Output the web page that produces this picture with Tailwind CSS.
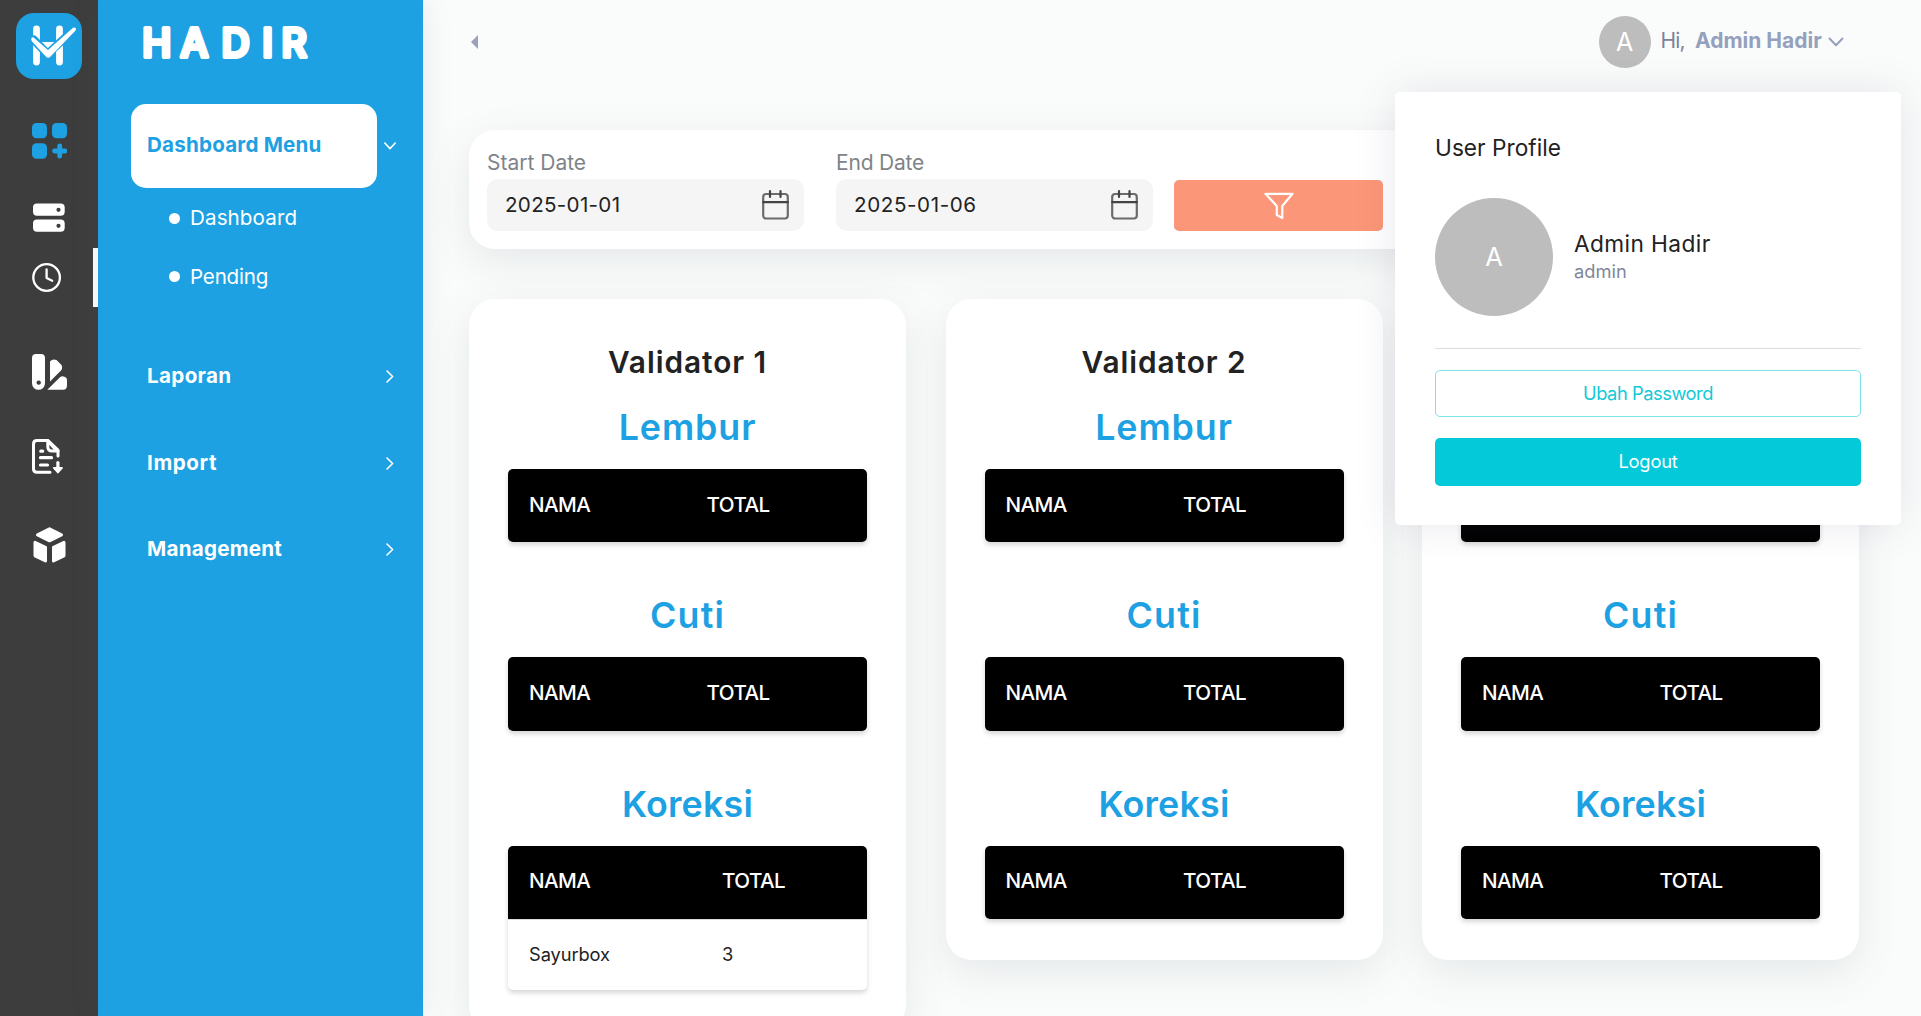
<!DOCTYPE html>
<html lang="id">
<head>
<meta charset="utf-8">
<title>Hadir</title>
<script src="https://cdn.jsdelivr.net/npm/@tailwindcss/browser@4"></script>
</head>
<body class="flex h-[1016px] w-[1921px] overflow-hidden bg-[#fafcfb] font-['Inter',sans-serif] text-[#222222]">

<!-- Icon rail -->
<aside class="z-10 flex h-full w-[98px] shrink-0 flex-col bg-[#3d3d3d] text-white">
  <svg class="mt-[13px] ml-4 size-[66px]" viewBox="16 13 66 66">
    <rect x="16" y="13" width="66" height="66" rx="18" fill="#1da1e2"/>
    <path d="M36.5 29V62M59.5 29V62M38 45.300H58" stroke="#fff" stroke-width="6.800" stroke-linecap="round" fill="none"/>
    <path d="M33.500 39.500 47.500 54 74 29.500" stroke="#1da1e2" stroke-width="8.500" stroke-linecap="round" stroke-linejoin="round" fill="none"/>
    <path d="M45 43.500H51L48 45.500Z" fill="#fff"/>
    <path d="M31.300 38.500Q32 36.600 33.600 37.400L48 50 73 27.800Q76.500 26.500 75.800 30.200L50.500 56.500Q48.200 59 45.800 56.500L32 41.500Q31 40.200 31.300 38.500Z" fill="#fff"/>
  </svg>
  <svg class="mt-11 ml-8 h-9 w-[35px] text-[#1da1e2]" viewBox="0 0 35 36" fill="currentColor">
    <rect width="15" height="15.300" rx="4.500"/><rect x="20" width="15" height="15.300" rx="4.500"/><rect y="20.300" width="15" height="15.500" rx="4.500"/>
    <path d="M27.700 22.800v10.400M22.500 28h10.400" stroke="currentColor" stroke-width="4.800" stroke-linecap="round"/>
  </svg>
  <svg class="mt-[44px] ml-[33px] h-[29px] w-8" viewBox="0 0 32 29">
    <rect y=".5" width="31.700" height="12.200" rx="4" fill="#fff"/><rect y="16.500" width="31.700" height="12.200" rx="4" fill="#fff"/>
    <circle cx="25.500" cy="6.800" r="2.100" fill="#3d3d3d"/><circle cx="25.500" cy="22.800" r="2.100" fill="#3d3d3d"/>
  </svg>
  <div class="mt-4 flex h-[59px] items-center border-r-[5px] border-white pb-px pl-8">
    <svg class="size-[29px]" viewBox="0 0 29 29" fill="none" stroke="currentColor" stroke-width="2.300" stroke-linecap="round" stroke-linejoin="round">
      <circle cx="14.600" cy="14.500" r="13.300"/><path d="M14.600 6.500V15l5.600 2.700"/>
    </svg>
  </div>
  <svg class="mt-[47px] ml-8 h-9 w-[35px]" viewBox="0 0 35 36" fill="currentColor">
    <path fill-rule="evenodd" d="M4 0H9Q13 0 13 4V29.300A6.500 6.500 0 0 1 0 29.300V4Q0 0 4 0ZM6.700 26.400a2.200 2.200 0 1 0 .01 0Z"/>
    <path d="M18 27.500V7.500Q20.500 4.500 24.500 6L29.500 11Q31 14 29 16.500Z"/>
    <path d="M15.300 35.700 28 23.300Q29.500 22 31.500 22.500 35 23 35 26V31.500Q35 35.700 31 35.700Z"/>
  </svg>
  <svg class="mt-[49px] ml-8 h-[35px] w-[31px]" viewBox="0 0 31 35" fill="none" stroke="currentColor" stroke-width="3" stroke-linecap="round" stroke-linejoin="round">
    <path d="M18 33.300H5Q1.500 33.300 1.500 30V5Q1.500 1.500 5 1.500H16L26 11.200V17"/>
    <path d="M15.800 1.600V7.500Q15.800 12 20 12H26M17.500 4 24 11"/>
    <path d="M8.800 12.200H10.700M8.500 18.700H19.500M8.500 26H15.500" stroke-width="3.200"/>
    <path d="M25.900 23.500V30" stroke-width="3.200"/><path d="M21.800 29H30L25.900 33.500Z" fill="currentColor" stroke-width="1.800"/>
  </svg>
  <svg class="mt-[53px] ml-[33px] h-9 w-[33px]" viewBox="0 0 33 36" fill="currentColor" stroke="currentColor" stroke-width="3" stroke-linejoin="round">
    <path d="M16.500 1.800 28.500 7.800 16.500 13.800 4.500 7.800Z"/>
    <path d="M2 15.300 12.500 20.300V34L2 28.800Z"/><path d="M31 15.300 20.500 20.300V34L31 28.800Z"/>
  </svg>
</aside>

<!-- Menu -->
<nav class="z-10 flex h-full w-[325px] shrink-0 flex-col bg-[#1da1e2] text-white shadow-[0_0_28px_rgba(82,100,105,0.12)]">
  <svg class="mt-2 ml-8 h-[70px] w-[200px] shrink-0" viewBox="130 8 200 70">
    <text x="142.300 180.500 221.500 262.200 281.500" y="57.400" fill="#fff" stroke="#fff" stroke-width="4.200" stroke-linejoin="round" font-family="Inter" font-weight="500" font-size="39">HADIR</text>
  </svg>
  <div class="mt-[26px] flex items-center pl-[33px]">
    <div class="flex h-[84px] w-[246px] items-center rounded-[15px] bg-white pb-px pl-4 text-[20.6px] font-bold tracking-[0.2px] text-[#1da1e2]">Dashboard Menu</div>
    <svg class="ml-[7px] h-2 w-3" viewBox="0 0 12 8" fill="none" stroke="currentColor" stroke-width="1.600" stroke-linecap="round" stroke-linejoin="round"><path d="M.8 1 6 6.600 11.200 1"/></svg>
  </div>
  <ul class="text-[20.6px]">
    <li class="flex h-[59px] items-center gap-2.5 pl-[71px]"><span class="mt-0.5 size-[11px] rounded-full bg-white"></span><span class="pt-0.5 tracking-[0.1px]">Dashboard</span></li>
    <li class="flex h-[59px] items-center gap-2.5 pl-[71px]"><span class="size-[11px] rounded-full bg-white"></span><span class="pt-0.5 tracking-[-0.2px]">Pending</span></li>
  </ul>
  <div class="mt-[27px] flex h-[87px] items-center justify-between pr-[29px] pl-[49px] text-[20.6px] font-bold"><span class="tracking-[0.35px]">Laporan</span>
    <svg class="h-[13px] w-2" viewBox="0 0 8 13" fill="none" stroke="currentColor" stroke-width="1.600" stroke-linecap="round" stroke-linejoin="round"><path d="M1 1 6.600 6.500 1 12"/></svg></div>
  <div class="flex h-[86px] items-center justify-between pr-[29px] pl-[49px] text-[20.6px] font-bold"><span class="tracking-[0.6px]">Import</span>
    <svg class="h-[13px] w-2" viewBox="0 0 8 13" fill="none" stroke="currentColor" stroke-width="1.600" stroke-linecap="round" stroke-linejoin="round"><path d="M1 1 6.600 6.500 1 12"/></svg></div>
  <div class="flex h-[86px] items-center justify-between pr-[29px] pl-[49px] text-[20.6px] font-bold"><span class="tracking-[0.25px]">Management</span>
    <svg class="h-[13px] w-2" viewBox="0 0 8 13" fill="none" stroke="currentColor" stroke-width="1.600" stroke-linecap="round" stroke-linejoin="round"><path d="M1 1 6.600 6.500 1 12"/></svg></div>
</nav>

<div class="relative flex min-w-0 flex-1 flex-col">
  <!-- Top bar -->
  <header class="flex h-[130px] shrink-0 items-start justify-between pt-4 pr-[77px] pl-[48px]">
    <svg class="mt-[19px] h-3.5 w-[7px]" viewBox="0 0 7 14"><path d="M7 0V14L0 7Z" fill="#9aa1bb"/></svg>
    <div class="flex items-center">
      <span class="flex size-[52px] items-center justify-center rounded-full bg-[#bdbdbd] pt-px text-[25px] text-white">A</span>
      <span class="mb-0.5 ml-2.5 w-[34.500px] text-[21px] tracking-[-0.8px] text-[#7e8299]">Hi,</span>
      <span class="mb-0.5 w-[133px] text-[21px] font-bold text-[#94a0bd]">Admin Hadir</span>
      <svg class="h-2.5 w-4" viewBox="0 0 16 10" fill="none" stroke="#94a0bd" stroke-width="2" stroke-linecap="round" stroke-linejoin="round"><path d="M1.500 1.500 8 8.200 14.500 1.500"/></svg>
    </div>
  </header>

  <main class="pl-[46px]">
    <!-- Date filter -->
    <section class="flex h-[119px] w-[1390px] items-start rounded-[26px] bg-white pt-[22px] pl-[18px] shadow-[0_12px_40px_rgba(82,92,105,0.12)]">
      <label class="w-[349px]">
        <span class="block text-[21px] leading-[22px] text-[#7e8488]">Start Date</span>
        <span class="mt-[5px] flex h-[52px] w-[317px] items-center justify-between rounded-[11px] bg-[#f5f5f5] pr-[15px] pl-[18px] text-[20.600px] tracking-[0.300px]"><span>2025-01-01</span>
          <svg class="h-[30px] w-[27px]" viewBox="0 0 27 30" fill="none" stroke="#6b6b6b" stroke-width="2.200" stroke-linecap="round"><rect x="1.200" y="4" width="24.600" height="24.500" rx="3"/><path d="M1.200 12.200H25.800M8 1.200V7M18.500 1.200V7" stroke="#444"/></svg>
        </span>
      </label>
      <label class="w-[338px]">
        <span class="block text-[21px] leading-[22px] tracking-[-0.200px] text-[#7e8488]">End Date</span>
        <span class="mt-[5px] flex h-[52px] w-[317px] items-center justify-between rounded-[11px] bg-[#f5f5f5] pr-[15px] pl-[18px] text-[20.600px] tracking-[0.600px]"><span>2025-01-06</span>
          <svg class="h-[30px] w-[27px]" viewBox="0 0 27 30" fill="none" stroke="#6b6b6b" stroke-width="2.200" stroke-linecap="round"><rect x="1.200" y="4" width="24.600" height="24.500" rx="3"/><path d="M1.200 12.200H25.800M8 1.200V7M18.500 1.200V7" stroke="#444"/></svg>
        </span>
      </label>
      <button class="mt-7 flex h-[51px] w-[209px] items-center justify-center rounded-[5px] bg-[#fb9678]">
        <svg class="h-7 w-[30px]" viewBox="0 0 30 28" fill="none" stroke="#fff" stroke-width="2.200" stroke-linejoin="round"><path d="M1.500 1.800H28.500L18.300 14V26L12.800 23V14Z"/></svg>
      </button>
    </section>

    <section id="cards" class="mt-[50px] flex items-start gap-[39.500px]"></section>
  </main>

  <!-- Profile menu -->
  <div class="absolute top-[92px] left-[972px] flex h-[433px] w-[506px] flex-col rounded-[5px] bg-white px-10 pt-[42px] shadow-[0_0_40px_rgba(82,63,105,0.13)]">
    <h3 class="text-[22.700px] leading-7">User Profile</h3>
    <div class="mt-9 flex items-center">
      <span class="flex size-[118px] items-center justify-center rounded-full bg-[#bdbdbd] text-[25.500px] text-white">A</span>
      <div class="ml-[21px] pb-0.5">
        <div class="pt-0.5 text-[22.700px] leading-7 tracking-[0.400px]">Admin Hadir</div>
        <div class="text-[18.300px] leading-[27px] text-[#80879b]">admin</div>
      </div>
    </div>
    <hr class="mt-8 border-[#dcdcdc]">
    <button class="mt-[21px] h-[47px] rounded-[5px] border border-[#7be3ea] text-[18.300px] tracking-[-0.450px] text-[#12c9d8]">Ubah Password</button>
    <button class="mt-[21px] h-12 rounded-[5px] bg-[#03c9d9] text-[18.300px] tracking-[-0.200px] text-white">Logout</button>
  </div>
</div>

<script>
const validators = [
  { name: "Validator 1", rows: { Koreksi: [["Sayurbox", 3]] } },
  { name: "Validator 2", rows: {} },
  { name: "Validator 3", rows: {} },
];
const headings = {
  Lembur: "tracking-[0.900px]",
  Cuti: "tracking-[1.200px]",
  Koreksi: "tracking-[0.200px]",
};
function table(title, rows) {
  const nameCol = rows.length ? "w-[193px]" : "w-[177.500px]";
  return `
  <h2 class="mb-5 text-center text-[35.800px] leading-[44px] font-semibold text-[#1da1e2] ${headings[title]}">${title}</h2>
  <div class="mb-[51px] overflow-hidden rounded-[5px] shadow-[0_3px_5px_rgba(0,0,0,0.16)]">
    <div class="flex h-[73.330px] items-center bg-black pb-px pl-[21px] text-[20.600px] font-medium tracking-[-0.550px] text-white"><span class="${nameCol}">NAMA</span><span>TOTAL</span></div>
    ${rows.map(([n, t]) => `<div class="flex h-[71px] items-center border-t border-[#dcdcdc] pb-px pl-[21px] text-[18.300px] tracking-[-0.100px]"><span class="${nameCol}">${n}</span><span>${t}</span></div>`).join("")}
  </div>`;
}
document.getElementById("cards").innerHTML = validators.map(v => `
  <article class="w-[437px] shrink-0 rounded-[26px] bg-white px-[39px] pt-[41px] pb-px shadow-[0_12px_40px_rgba(82,92,105,0.12)]">
    <h1 class="mb-[21px] text-center text-[29.800px] leading-[44px] font-semibold tracking-[0.950px]">${v.name}</h1>
    ${Object.keys(headings).map(k => table(k, v.rows[k] || [])).join("")}
    <div class="-mt-[11px]"></div>
  </article>`).join("");
</script>
</body>
</html>
